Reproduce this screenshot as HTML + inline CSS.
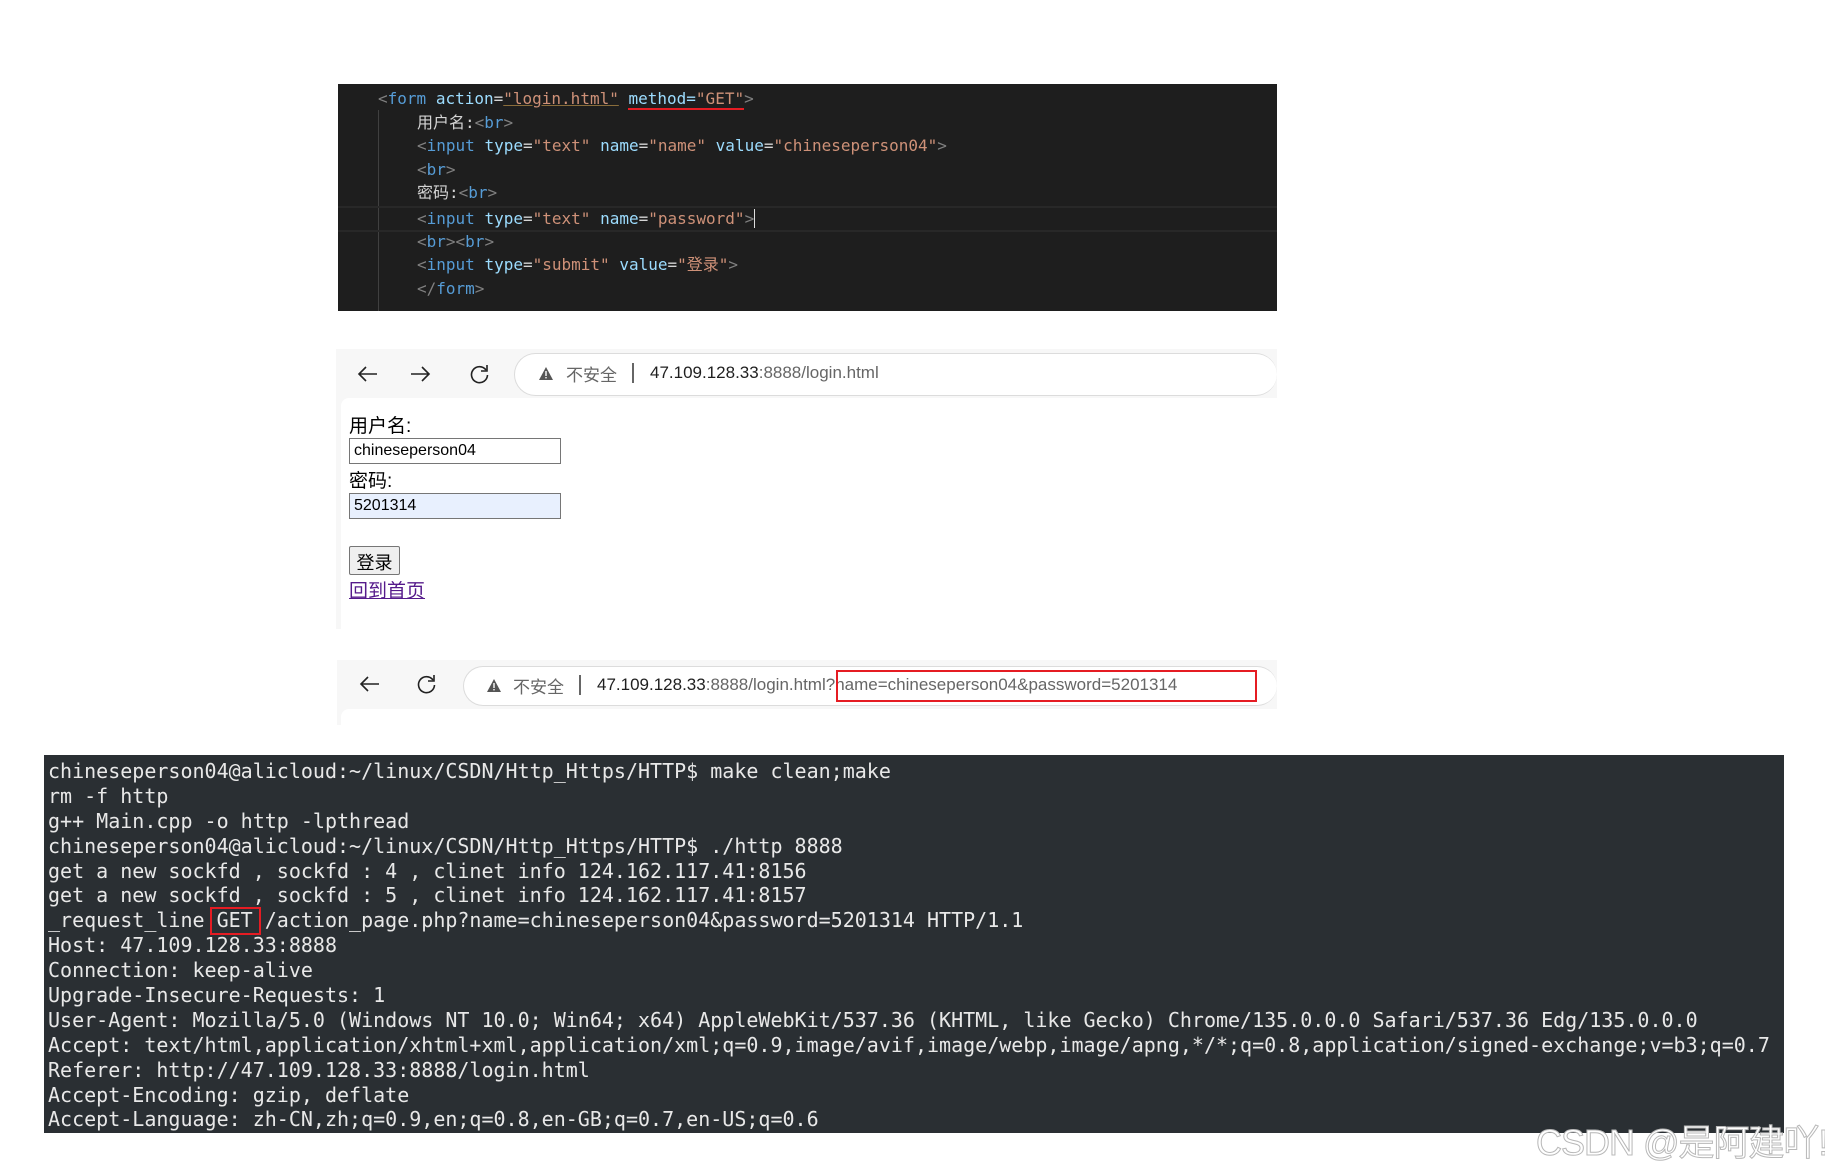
<!DOCTYPE html>
<html><head><meta charset="utf-8">
<style>
*{margin:0;padding:0;box-sizing:border-box}
body{width:1825px;height:1174px;background:#fff;position:relative;overflow:hidden;font-family:"Liberation Sans","Noto Sans CJK SC",sans-serif}
.abs{position:absolute}
#code{left:338px;top:84px;width:939px;height:227px;background:#1e1e1e;font-family:"DejaVu Sans Mono","Noto Sans CJK SC",monospace;font-size:16px;color:#d4d4d4}
#code .l{position:absolute;left:0;white-space:pre;line-height:24px;height:24px}
.g{color:#808080}.t{color:#569cd6}.a{color:#9cdcfe}.s{color:#ce9178}
#term{left:44px;top:755px;width:1740px;height:378px;background:#2a2f33;color:#e8e8e8;font-family:"DejaVu Sans Mono",monospace;font-size:20px;letter-spacing:0;padding:4px 0 0 4px}
#term div{white-space:pre;height:24.9px;line-height:24.9px}
.bar{background:#f7f7f7}
.addr{border:1.5px solid #dcdcdc;border-radius:22px;background:#fff;border-right:none}
.ut{font-size:17px;color:#1f1f1f;white-space:pre}
.ut .d{color:#666}
</style></head><body>

<div id="code" class="abs">
  <div class="abs" style="left:40px;top:26px;width:1px;height:201px;background:#404040"></div>
  <div class="abs" style="left:0;top:122px;width:939px;height:26px;border-top:2px solid #282828;border-bottom:2px solid #282828"></div>
  <div class="l" style="left:40px;top:3px"><span class="g">&lt;</span><span class="t">form</span> <span class="a">action</span>=<span class="s" style="text-decoration:underline;text-decoration-color:#8a6d3b">"login.html"</span> <span class="a" style="border-bottom:2px solid #e51c23">method=</span><span class="s" style="border-bottom:2px solid #e51c23">"GET"</span><span class="g">&gt;</span></div>
  <div class="l" style="left:79px;top:27px">用户名:<span class="g">&lt;</span><span class="t">br</span><span class="g">&gt;</span></div>
  <div class="l" style="left:79px;top:50px"><span class="g">&lt;</span><span class="t">input</span> <span class="a">type</span>=<span class="s">"text"</span> <span class="a">name</span>=<span class="s">"name"</span> <span class="a">value</span>=<span class="s">"chineseperson04"</span><span class="g">&gt;</span></div>
  <div class="l" style="left:79px;top:74px"><span class="g">&lt;</span><span class="t">br</span><span class="g">&gt;</span></div>
  <div class="l" style="left:79px;top:97px">密码:<span class="g">&lt;</span><span class="t">br</span><span class="g">&gt;</span></div>
  <div class="l" style="left:79px;top:123px"><span class="g">&lt;</span><span class="t">input</span> <span class="a">type</span>=<span class="s">"text"</span> <span class="a">name</span>=<span class="s">"password"</span><span class="g">&gt;</span><span style="border-left:1.5px solid #ddd"></span></div>
  <div class="l" style="left:79px;top:146px"><span class="g">&lt;</span><span class="t">br</span><span class="g">&gt;&lt;</span><span class="t">br</span><span class="g">&gt;</span></div>
  <div class="l" style="left:79px;top:169px"><span class="g">&lt;</span><span class="t">input</span> <span class="a">type</span>=<span class="s">"submit"</span> <span class="a">value</span>=<span class="s">"登录"</span><span class="g">&gt;</span></div>
  <div class="l" style="left:79px;top:193px"><span class="g">&lt;/</span><span class="t">form</span><span class="g">&gt;</span></div>
</div>

<!-- browser 1 -->
<div class="abs bar" style="left:336px;top:349px;width:941px;height:280px"></div>
<div class="abs" style="left:341px;top:398px;width:936px;height:231px;background:#fff;border-radius:8px 0 0 0"></div>
<svg class="abs" style="left:355px;top:362px" width="140" height="26" viewBox="0 0 140 26" fill="none" stroke="#222" stroke-width="1.6">
 <path d="M22 12H4M11 5L4 12l7 7"/>
 <path d="M56 12h18M67 5l7 7-7 7"/>
 <path d="M131 8a8 8 0 1 0 1.5 5"/><path d="M132 3v6h-6"/>
</svg>
<div class="abs addr" style="left:514px;top:353px;width:763px;height:43px"></div>
<svg class="abs" style="left:538px;top:366px" width="16" height="15" viewBox="0 0 16 15"><path d="M8 1L15 14H1z" fill="#555"/><rect x="7.3" y="5" width="1.4" height="5" fill="#fff"/><rect x="7.3" y="11" width="1.4" height="1.4" fill="#fff"/></svg>
<div class="abs ut" style="left:566px;top:361px;color:#666">不安全</div>
<div class="abs" style="left:632px;top:363px;width:1.5px;height:20px;background:#666"></div>
<div class="abs ut" style="left:650px;top:363px">47.109.128.33<span class="d">:8888/login.html</span></div>

<div class="abs" style="left:349px;top:411px;font-size:19px;color:#000">用户名:</div>
<div class="abs" style="left:349px;top:438px;width:212px;height:26px;border:1px solid #767676;font-size:16px;padding:3px 4px">chineseperson04</div>
<div class="abs" style="left:349px;top:466px;font-size:19px">密码:</div>
<div class="abs" style="left:349px;top:493px;width:212px;height:26px;border:1px solid #767676;background:#e8f0fe;font-size:16px;padding:3px 4px">5201314</div>
<div class="abs" style="left:349px;top:546px;width:51px;height:29px;border:1px solid #767676;border-radius:2px;background:#efefef;font-size:18px;padding:2px 0;text-align:center;white-space:nowrap">登录</div>
<div class="abs" style="left:349px;top:576px;font-size:19px;color:#551a8b;text-decoration:underline">回到首页</div>

<!-- browser 2 -->
<div class="abs bar" style="left:337px;top:660px;width:940px;height:65px"></div>
<div class="abs" style="left:341px;top:709px;width:936px;height:16px;background:#fff;border-radius:8px 0 0 0"></div>
<svg class="abs" style="left:357px;top:672px" width="80" height="26" viewBox="0 0 80 26" fill="none" stroke="#222" stroke-width="1.6">
 <path d="M22 12H4M11 5L4 12l7 7"/>
 <path d="M76 8a8 8 0 1 0 1.5 5"/><path d="M77 3v6h-6"/>
</svg>
<div class="abs addr" style="left:463px;top:666px;width:814px;height:40px"></div>
<svg class="abs" style="left:486px;top:678px" width="16" height="15" viewBox="0 0 16 15"><path d="M8 1L15 14H1z" fill="#555"/><rect x="7.3" y="5" width="1.4" height="5" fill="#fff"/><rect x="7.3" y="11" width="1.4" height="1.4" fill="#fff"/></svg>
<div class="abs ut" style="left:513px;top:673px;color:#666">不安全</div>
<div class="abs" style="left:579px;top:675px;width:1.5px;height:20px;background:#666"></div>
<div class="abs ut" style="left:597px;top:675px">47.109.128.33<span class="d">:8888/login.html?name=chineseperson04&amp;password=5201314</span></div>
<div class="abs" style="left:836px;top:670px;width:421px;height:32px;border:2.5px solid #e51c23"></div>

<!-- terminal -->
<div id="term" class="abs">
<div>chineseperson04@alicloud:~/linux/CSDN/Http_Https/HTTP$ make clean;make</div>
<div>rm -f http</div>
<div>g++ Main.cpp -o http -lpthread</div>
<div>chineseperson04@alicloud:~/linux/CSDN/Http_Https/HTTP$ ./http 8888</div>
<div>get a new sockfd , sockfd : 4 , clinet info 124.162.117.41:8156</div>
<div>get a new sockfd , sockfd : 5 , clinet info 124.162.117.41:8157</div>
<div>_request_line GET /action_page.php?name=chineseperson04&amp;password=5201314 HTTP/1.1</div>
<div>Host: 47.109.128.33:8888</div>
<div>Connection: keep-alive</div>
<div>Upgrade-Insecure-Requests: 1</div>
<div>User-Agent: Mozilla/5.0 (Windows NT 10.0; Win64; x64) AppleWebKit/537.36 (KHTML, like Gecko) Chrome/135.0.0.0 Safari/537.36 Edg/135.0.0.0</div>
<div>Accept: text/html,application/xhtml+xml,application/xml;q=0.9,image/avif,image/webp,image/apng,*/*;q=0.8,application/signed-exchange;v=b3;q=0.7</div>
<div>Referer: http://47.109.128.33:8888/login.html</div>
<div>Accept-Encoding: gzip, deflate</div>
<div>Accept-Language: zh-CN,zh;q=0.9,en;q=0.8,en-GB;q=0.7,en-US;q=0.6</div>
</div>
<div class="abs" style="left:210px;top:907px;width:51px;height:28px;border:2.5px solid #e51c23"></div>

<div class="abs" style="left:1536px;top:1114px;font-size:36px;color:#fff;-webkit-text-stroke:1px #b8b8b8;white-space:nowrap;letter-spacing:-1px">CSDN @是阿建吖!</div>
</body></html>
